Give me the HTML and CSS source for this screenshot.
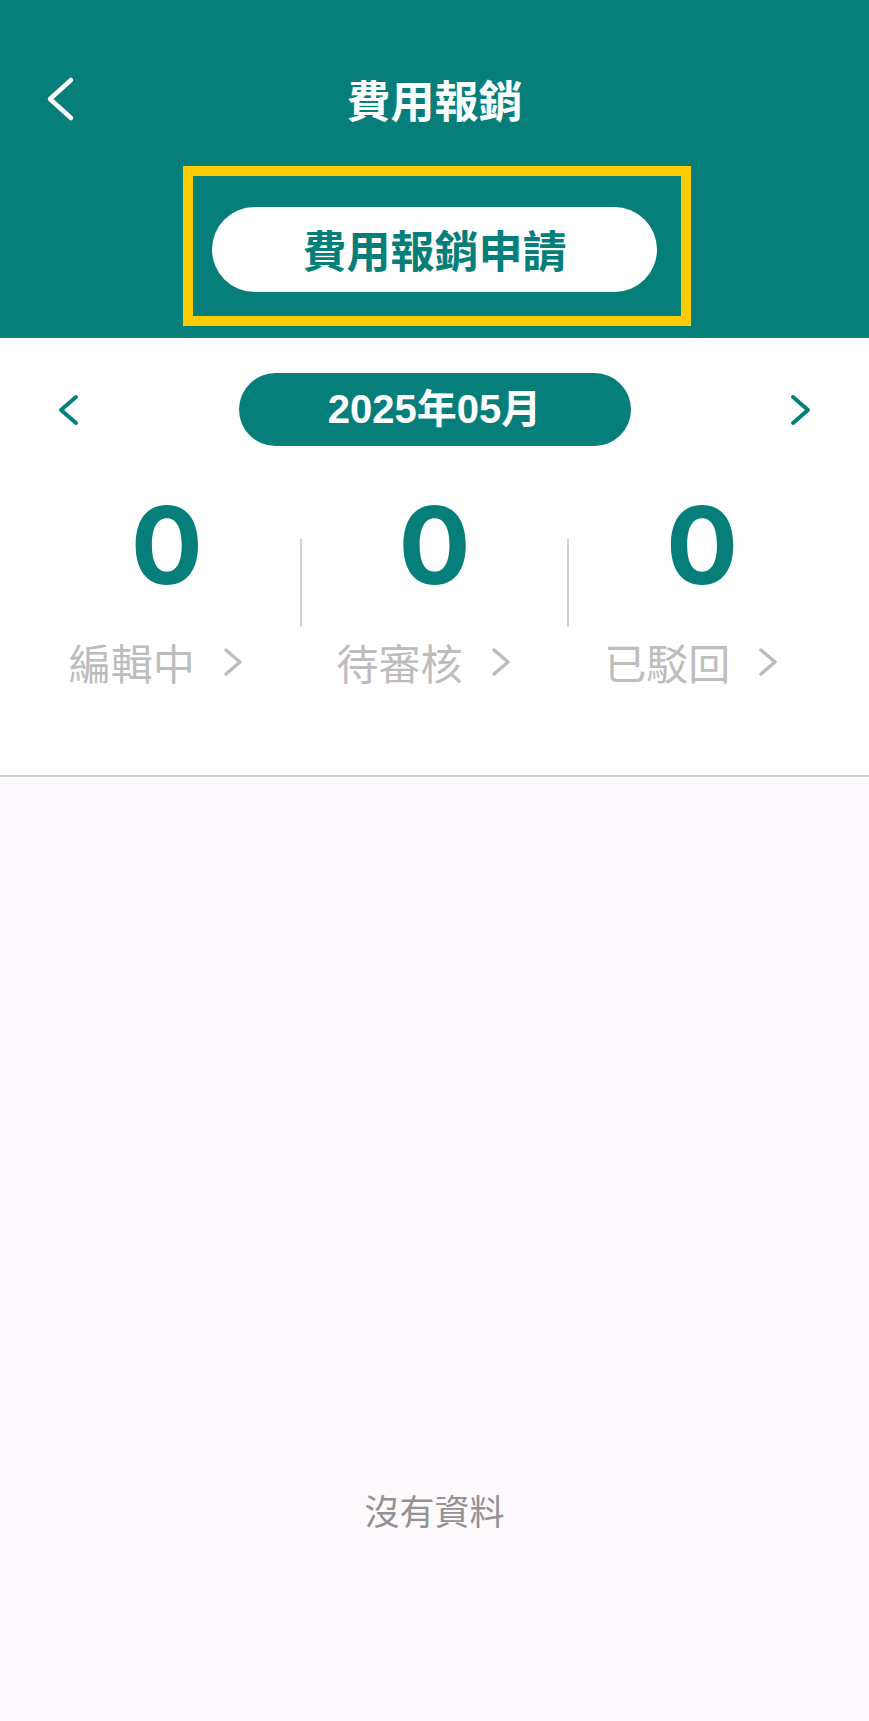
FILE: index.html
```html
<!DOCTYPE html>
<html lang="zh-Hant">

<head>
    <meta charset="UTF-8">
    <meta name="viewport" content="width=device-width, initial-scale=1.0">
    <title>費用報銷</title>
    <link rel="stylesheet" href="styles.css">
</head>

<body>
    <!-- Nagłówek -->
    <header class="top">
        <div class="top-bar">
            <button class="back" aria-label="返回">
                <svg width="30" height="48" viewBox="0 0 30 48">
                    <path d="M25 5 L4 24 L25 43" fill="none" stroke="#fff" stroke-width="4.5" stroke-linecap="round" stroke-linejoin="round"/>
                </svg>
            </button>
            <h1 class="title">費用報銷</h1>
        </div>
        <div class="apply-frame">
            <button class="apply-btn">費用報銷申請</button>
        </div>
    </header>

    <!-- Podsumowanie miesiąca -->
    <section class="summary">
        <div class="month-row">
            <button class="month-nav" aria-label="上個月">
                <svg width="21" height="32" viewBox="0 0 21 32">
                    <path d="M18 3 L3 16 L18 29" fill="none" stroke="#067f7b" stroke-width="4" stroke-linecap="round" stroke-linejoin="round"/>
                </svg>
            </button>
            <div class="month-pill">2025年05月</div>
            <button class="month-nav" aria-label="下個月">
                <svg width="21" height="32" viewBox="0 0 21 32">
                    <path d="M3 3 L18 16 L3 29" fill="none" stroke="#067f7b" stroke-width="4" stroke-linecap="round" stroke-linejoin="round"/>
                </svg>
            </button>
        </div>

        <div class="stats">
            <div class="stat">
                <div class="stat-num">0</div>
                <div class="stat-label">編輯中
                    <svg class="arrow" width="20" height="32" viewBox="0 0 20 32">
                        <path d="M3 4 L17 16 L3 28" fill="none" stroke="#bdbdbd" stroke-width="3.5" stroke-linecap="round" stroke-linejoin="round"/>
                    </svg>
                </div>
            </div>
            <div class="divider"></div>
            <div class="stat">
                <div class="stat-num">0</div>
                <div class="stat-label">待審核
                    <svg class="arrow" width="20" height="32" viewBox="0 0 20 32">
                        <path d="M3 4 L17 16 L3 28" fill="none" stroke="#bdbdbd" stroke-width="3.5" stroke-linecap="round" stroke-linejoin="round"/>
                    </svg>
                </div>
            </div>
            <div class="divider"></div>
            <div class="stat">
                <div class="stat-num">0</div>
                <div class="stat-label">已駁回
                    <svg class="arrow" width="20" height="32" viewBox="0 0 20 32">
                        <path d="M3 4 L17 16 L3 28" fill="none" stroke="#bdbdbd" stroke-width="3.5" stroke-linecap="round" stroke-linejoin="round"/>
                    </svg>
                </div>
            </div>
        </div>
    </section>

    <!-- Lista -->
    <main class="list">
        <p class="empty">沒有資料</p>
    </main>
</body>

</html>
```

FILE: styles.css
```css
body {
    margin: 0;
    font-family: "Noto Sans CJK TC", sans-serif;
    background-color: #fdf9fd;
}

button {
    font-family: inherit;
    border: none;
    background: none;
    padding: 0;
    cursor: pointer;
}

.top {
    background-color: #067f7b;
    padding: 56px 0 12px;
}

.top-bar {
    position: relative;
    height: 86px;
    display: flex;
    align-items: center;
    justify-content: center;
}

.back {
    position: absolute;
    left: 46px;
    top: 19px;
    width: 30px;
    height: 48px;
}

.back svg {
    display: block;
}

.title {
    margin: 0;
    color: white;
    font-size: 44px;
    font-weight: 700;
    line-height: 1;
}

.apply-frame {
    box-sizing: border-box;
    width: 508px;
    margin: 24px 0 0 183px;
    border: 10px solid #ffcc00;
    padding: 31px 24px 24px 19px;
}

.apply-btn {
    display: block;
    width: 445px;
    height: 85px;
    border-radius: 43px;
    background-color: white;
    color: #067f7b;
    font-size: 44px;
    font-weight: 700;
    line-height: 85px;
}

.summary {
    background-color: white;
    padding-top: 35px;
    height: 402px;
    border-bottom: 2px solid #d0d0d0;
}

.month-row {
    display: flex;
    align-items: center;
    justify-content: space-between;
    padding: 0 58px;
}

.month-nav svg {
    display: block;
}

.month-pill {
    width: 392px;
    height: 73px;
    border-radius: 37px;
    background-color: #067f7b;
    color: white;
    font-family: "Liberation Sans", "Noto Sans CJK TC", sans-serif;
    font-size: 40px;
    font-weight: 700;
    line-height: 73px;
    text-align: center;
}

.stats {
    display: flex;
    padding: 0 34px;
    margin-top: 46px;
}

.stat {
    flex: 1;
    text-align: center;
}

.divider {
    width: 2px;
    height: 88px;
    margin-top: 47px;
    background-color: #d2d2d2;
}

.stat-num {
    color: #067f7b;
    font-family: Inter, sans-serif;
    font-size: 107px;
    font-weight: 700;
    line-height: 107px;
}

.stat-label {
    display: flex;
    align-items: center;
    justify-content: center;
    margin-top: 38px;
    color: #bdbdbd;
    font-size: 42px;
    line-height: 50px;
}

.arrow {
    margin-left: 28px;
    padding-right: 22px;
}

.list {
    padding-top: 712px;
}

.empty {
    margin: 0;
    text-align: center;
    color: #929292;
    font-size: 35px;
    line-height: 42px;
}
```
